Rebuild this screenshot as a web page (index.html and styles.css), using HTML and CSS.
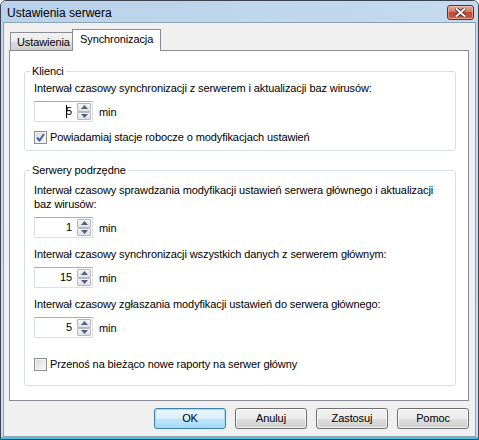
FILE: index.html
```html
<!DOCTYPE html>
<html lang="pl">
<head>
<meta charset="utf-8">
<title>Ustawienia serwera</title>
<link rel="stylesheet" href="styles.css">
</head>
<body>
<div class="window">
  <div class="titlebar">
    <span class="title">Ustawienia serwera</span>
    <span class="close">
      <svg width="11" height="9" viewBox="0 0 11 9">
        <path d="M1.5 1 L9.5 8 M9.5 1 L1.5 8" stroke="#3a1d18" stroke-width="3.6" stroke-linecap="square"/>
        <path d="M1.5 1 L9.5 8 M9.5 1 L1.5 8" stroke="#ffffff" stroke-width="2" stroke-linecap="square"/>
      </svg>
    </span>
  </div>
  <div class="client">
    <div class="tabs">
      <div class="tab">Ustawienia</div>
      <div class="tab active">Synchronizacja</div>
    </div>
    <div class="panel">
      <fieldset class="group group-clients">
        <legend>Klienci</legend>
        <div class="label">Interwał czasowy synchronizacji z serwerem i aktualizacji baz wirusów:</div>
        <div class="spinrow">
          <span class="edit"><span class="caret"></span>5</span>
          <span class="updown">
            <span class="ud"><svg width="7" height="4" viewBox="0 0 7 4"><path d="M0 4 L3.5 0 L7 4 Z" fill="#4d6185"/></svg></span>
            <span class="ud"><svg width="7" height="4" viewBox="0 0 7 4"><path d="M0 0 L7 0 L3.5 4 Z" fill="#4d6185"/></svg></span>
          </span>
          <span class="unit">min</span>
        </div>
        <div class="check">
          <span class="box checked">
            <svg width="9" height="9" viewBox="0 0 9 9"><path d="M1 4.5 L3.5 7.5 L8 1" fill="none" stroke="#4a62a8" stroke-width="2"/></svg>
          </span>
          <span>Powiadamiaj stacje robocze o modyfikacjach ustawień</span>
        </div>
      </fieldset>
      <fieldset class="group group-servers">
        <legend>Serwery podrzędne</legend>
        <div class="label">Interwał czasowy sprawdzania modyfikacji ustawień serwera głównego i aktualizacji baz wirusów:</div>
        <div class="spinrow">
          <span class="edit">1</span>
          <span class="updown">
            <span class="ud"><svg width="7" height="4" viewBox="0 0 7 4"><path d="M0 4 L3.5 0 L7 4 Z" fill="#4d6185"/></svg></span>
            <span class="ud"><svg width="7" height="4" viewBox="0 0 7 4"><path d="M0 0 L7 0 L3.5 4 Z" fill="#4d6185"/></svg></span>
          </span>
          <span class="unit">min</span>
        </div>
        <div class="label">Interwał czasowy synchronizacji wszystkich danych z serwerem głównym:</div>
        <div class="spinrow">
          <span class="edit">15</span>
          <span class="updown">
            <span class="ud"><svg width="7" height="4" viewBox="0 0 7 4"><path d="M0 4 L3.5 0 L7 4 Z" fill="#4d6185"/></svg></span>
            <span class="ud"><svg width="7" height="4" viewBox="0 0 7 4"><path d="M0 0 L7 0 L3.5 4 Z" fill="#4d6185"/></svg></span>
          </span>
          <span class="unit">min</span>
        </div>
        <div class="label">Interwał czasowy zgłaszania modyfikacji ustawień do serwera głównego:</div>
        <div class="spinrow">
          <span class="edit">5</span>
          <span class="updown">
            <span class="ud"><svg width="7" height="4" viewBox="0 0 7 4"><path d="M0 4 L3.5 0 L7 4 Z" fill="#4d6185"/></svg></span>
            <span class="ud"><svg width="7" height="4" viewBox="0 0 7 4"><path d="M0 0 L7 0 L3.5 4 Z" fill="#4d6185"/></svg></span>
          </span>
          <span class="unit">min</span>
        </div>
        <div class="check check-last">
          <span class="box"></span>
          <span>Przenoś na bieżąco nowe raporty na serwer główny</span>
        </div>
      </fieldset>
    </div>
    <div class="buttons">
      <span class="btn default">OK</span>
      <span class="btn">Anuluj</span>
      <span class="btn">Zastosuj</span>
      <span class="btn">Pomoc</span>
    </div>
  </div>
</div>
</body>
</html>
```

FILE: styles.css
```css
html, body {
  margin: 0;
  padding: 0;
  background: #ffffff;
}

body {
  font-family: "Liberation Sans", Arial, sans-serif;
  font-size: 11px;
  letter-spacing: -0.1px;
  color: #000000;
}

.window {
  box-sizing: border-box;
  width: 479px;
  height: 440px;
  border: 1px solid #3b4350;
  border-radius: 6px 6px 0 0;
  background:
    linear-gradient(#46c3e4, #46c3e4) left bottom / 100% 2px no-repeat,
    linear-gradient(to bottom, #b7cfe9 0px, #c3d8ef 30px, #c8dcf1 100%);
  display: flex;
  flex-direction: column;
  overflow: hidden;
}

.titlebar {
  height: 21px;
  flex: none;
  display: flex;
  align-items: flex-start;
  justify-content: space-between;
  background: linear-gradient(to right, #b9d1ea, #c6daef);
}

.title {
  font-size: 12px;
  letter-spacing: 0;
  line-height: 14px;
  margin: 5px 0 0 6px;
  color: #000000;
}

.close {
  box-sizing: border-box;
  width: 27px;
  height: 15px;
  margin: 4px 4px 0 0;
  border: 1px solid #6e2a20;
  border-radius: 3px;
  background: linear-gradient(to bottom, #e8a899 0%, #d47a66 45%, #c24a31 50%, #c8503a 80%, #dc7a5c 100%);
  box-shadow: inset 0 0 0 1px rgba(255, 220, 210, 0.45);
  display: flex;
  align-items: center;
  justify-content: center;
}

.client {
  box-sizing: border-box;
  flex: 1;
  margin: 0 2px 2px 2px;
  border: 1px solid #8fa3b8;
  background: #f0f0f0;
  display: flex;
  flex-direction: column;
}

.tabs {
  height: 21px;
  margin-top: 6px;
  padding-left: 6px;
  display: flex;
  align-items: flex-end;
  flex: none;
}

.tab {
  box-sizing: border-box;
  height: 18px;
  padding: 1px 0 0 6px;
  border: 1px solid #898c95;
  border-bottom: none;
  background: linear-gradient(to bottom, #f2f2f2 0%, #ebebeb 50%, #dddddd 51%, #cfcfcf 100%);
  line-height: 16px;
  width: 63px;
}

.tab.active {
  width: 89px;
  height: 22px;
  margin-left: -1px;
  margin-bottom: -1px;
  background: #ffffff;
  position: relative;
  z-index: 1;
  padding: 2px 0 0 7px;
  line-height: 14px;
}

.panel {
  box-sizing: border-box;
  height: 351px;
  margin: 0 6px 0 5px;
  border: 1px solid #898c95;
  background: #ffffff;
  padding: 0 12px 0 14px;
  flex: none;
}

.group {
  margin: 0;
  padding: 0 8px 0 9px;
  border: 1px solid #d5dfe5;
  border-radius: 3px;
  min-inline-size: 0;
}

.group legend {
  padding: 0 2px;
  margin-left: -4px;
  line-height: 13px;
}

.group-clients {
  margin-top: 14px;
  padding-top: 3px;
  padding-bottom: 6px;
}

.group-servers {
  margin-top: 13px;
  padding-top: 6px;
  padding-bottom: 14px;
}

.label {
  line-height: 14px;
}

.spinrow {
  display: flex;
  align-items: center;
  margin-top: 6px;
  margin-bottom: 9px;
}

.edit {
  box-sizing: border-box;
  width: 43px;
  height: 21px;
  border: 1px solid #dbdfe6;
  border-top-color: #abadb3;
  border-right: none;
  background: #ffffff;
  text-align: right;
  padding-right: 5px;
  line-height: 19px;
}

.caret {
  display: inline-block;
  width: 1px;
  height: 13px;
  background: #000000;
  vertical-align: -3px;
  margin-right: -1px;
}

.updown {
  box-sizing: border-box;
  width: 16px;
  height: 21px;
  display: flex;
  flex-direction: column;
  justify-content: space-between;
  padding: 1px 1px 1px 0;
  background: #ffffff;
  border: 1px solid #dbdfe6;
  border-top-color: #abadb3;
  border-left: none;
}

.ud {
  box-sizing: border-box;
  height: 9px;
  border: 1px solid #b6b8bc;
  border-radius: 1px;
  background: linear-gradient(to bottom, #f4f4f4, #e2e2e2);
  display: flex;
  align-items: center;
  justify-content: center;
}

.unit {
  margin-left: 6px;
}

.check {
  display: flex;
  align-items: center;
  line-height: 14px;
}

.check-last {
  margin-top: 19px;
}

.group-clients .spinrow {
  margin-bottom: 8px;
}

.box {
  box-sizing: border-box;
  width: 13px;
  height: 13px;
  margin-right: 3px;
  border: 1px solid #8f8f8f;
  background: linear-gradient(135deg, #d5d8dd 0%, #eceef0 60%, #f8f8f8 100%);
  box-shadow: inset 0 0 0 1px #f4f4f4;
  display: flex;
  align-items: center;
  justify-content: center;
}

.buttons {
  display: flex;
  justify-content: flex-end;
  gap: 9px;
  margin: 7px 6px 0 0;
  flex: none;
}

.btn {
  box-sizing: border-box;
  width: 72px;
  height: 21px;
  border: 1px solid #707070;
  border-radius: 3px;
  background: linear-gradient(to bottom, #f2f2f2 0%, #ebebeb 50%, #dddddd 51%, #cfcfcf 100%);
  box-shadow: inset 0 0 0 1px rgba(255, 255, 255, 0.7);
  text-align: center;
  line-height: 19px;
}

.btn.default {
  border-color: #3c7fb1;
  background: linear-gradient(to bottom, #eaf6fd 0%, #d9f0fc 50%, #bee6fd 51%, #a7d9f5 100%);
  box-shadow: inset 0 0 0 1px #9fe0f8;
}
```
